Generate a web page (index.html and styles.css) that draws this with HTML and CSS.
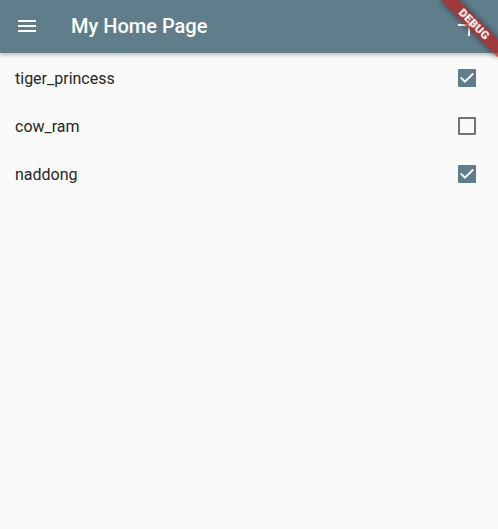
FILE: index.html
```html
<!DOCTYPE html>
<html lang="en">
<head>
  <meta charset="UTF-8">
  <meta name="viewport" content="width=device-width, initial-scale=1.0">
  <title>My Home Page</title>
  <link rel="stylesheet" href="styles.css">
</head>
<body>
  <header class="app-bar">
    <button class="icon-button menu-button" aria-label="Menu">
      <svg width="24" height="24" viewBox="0 0 24 24"><path d="M3 18h18v-2H3v2zm0-5h18v-2H3v2zm0-7v2h18V6H3z" fill="#fff"/></svg>
    </button>
    <h1 class="title">My Home Page</h1>
    <button class="icon-button add-button" aria-label="Add">
      <svg width="24" height="24" viewBox="0 0 24 24"><path d="M1 11h22v2H1zM11 1h2v22h-2z" fill="#fff"/></svg>
    </button>
  </header>

  <ul class="list">
    <li class="list-item">
      <span class="name">tiger_princess</span>
      <span class="checkbox checked">
        <svg width="18" height="18" viewBox="0 0 18 18"><path d="M2.7 8.4l4.2 4.2 8.4-8.1" fill="none" stroke="#fff" stroke-width="2"/></svg>
      </span>
    </li>
    <li class="list-item">
      <span class="name">cow_ram</span>
      <span class="checkbox"></span>
    </li>
    <li class="list-item">
      <span class="name">naddong</span>
      <span class="checkbox checked">
        <svg width="18" height="18" viewBox="0 0 18 18"><path d="M2.7 8.4l4.2 4.2 8.4-8.1" fill="none" stroke="#fff" stroke-width="2"/></svg>
      </span>
    </li>
  </ul>

  <div class="debug-banner">DEBUG</div>
</body>
</html>
```

FILE: styles.css
```css
body {
  margin: 0;
  background-color: #fafafa;
  font-family: 'Roboto', 'Liberation Sans', sans-serif;
  height: 529px;
  overflow: hidden;
}
.app-bar {
  display: flex;
  align-items: center;
  height: 53px;
  background-color: #607d8b;
  box-shadow: 0 2px 4px rgba(0, 0, 0, 0.25);
  position: relative;
}
.icon-button {
  border: none;
  background: none;
  padding: 0;
  display: flex;
}
.menu-button {
  margin-left: 15px;
  margin-top: -2px;
}
.add-button {
  margin-left: auto;
  margin-right: 17px;
  margin-top: -4px;
}
.title {
  margin: -1px 0 0 32px;
  color: #fff;
  font-size: 20px;
  font-weight: 500;
}
.list {
  list-style: none;
  margin: 0;
  padding: 0;
}
.list-item {
  display: flex;
  align-items: center;
  justify-content: space-between;
  height: 48px;
  padding: 0 22px 0 15px;
  color: #262626;
  font-size: 16px;
}
.name {
  padding-top: 3px;
}
.checkbox {
  width: 18px;
  height: 18px;
  box-sizing: border-box;
  border: 2px solid #737373;
  border-radius: 1px;
  display: flex;
  margin-top: 1px;
}
.checkbox.checked {
  border: none;
  background-color: #607d8b;
}
.debug-banner {
  position: fixed;
  top: 18px;
  left: 434px;
  width: 80px;
  height: 13px;
  line-height: 13px;
  transform: rotate(45deg);
  background-color: rgba(183, 28, 28, 0.7);
  box-shadow: 0 0 6px rgba(0, 0, 0, 0.5);
  color: #fff;
  font-size: 11.5px;
  font-weight: 900;
  text-align: center;
  letter-spacing: 0.3px;
}
```
